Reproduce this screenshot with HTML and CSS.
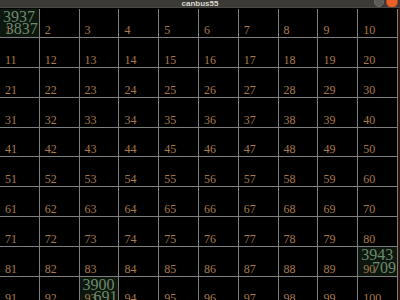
FILE: index.html
```html
<!DOCTYPE html>
<html>
<head>
<meta charset="utf-8">
<title>canbus55</title>
<link rel="stylesheet" href="styles.css">
</head>
<body>
<div class="window">
  <div class="titlebar">
    <div class="tb-side"></div>
    <div class="tb-title">canbus55</div>
    <div class="tb-side tb-buttons">
      <span class="btn btn-min"></span>
      <span class="btn btn-close"></span>
    </div>
  </div>
  <div class="content">
    <div class="grid">
      <div class="cell hot"><span class="num">1</span><span class="val top">3937</span><span class="val bottom">3837</span></div>
      <div class="cell"><span class="num">2</span></div>
      <div class="cell"><span class="num">3</span></div>
      <div class="cell"><span class="num">4</span></div>
      <div class="cell"><span class="num">5</span></div>
      <div class="cell"><span class="num">6</span></div>
      <div class="cell"><span class="num">7</span></div>
      <div class="cell"><span class="num">8</span></div>
      <div class="cell"><span class="num">9</span></div>
      <div class="cell"><span class="num">10</span></div>
      <div class="cell"><span class="num">11</span></div>
      <div class="cell"><span class="num">12</span></div>
      <div class="cell"><span class="num">13</span></div>
      <div class="cell"><span class="num">14</span></div>
      <div class="cell"><span class="num">15</span></div>
      <div class="cell"><span class="num">16</span></div>
      <div class="cell"><span class="num">17</span></div>
      <div class="cell"><span class="num">18</span></div>
      <div class="cell"><span class="num">19</span></div>
      <div class="cell"><span class="num">20</span></div>
      <div class="cell"><span class="num">21</span></div>
      <div class="cell"><span class="num">22</span></div>
      <div class="cell"><span class="num">23</span></div>
      <div class="cell"><span class="num">24</span></div>
      <div class="cell"><span class="num">25</span></div>
      <div class="cell"><span class="num">26</span></div>
      <div class="cell"><span class="num">27</span></div>
      <div class="cell"><span class="num">28</span></div>
      <div class="cell"><span class="num">29</span></div>
      <div class="cell"><span class="num">30</span></div>
      <div class="cell"><span class="num">31</span></div>
      <div class="cell"><span class="num">32</span></div>
      <div class="cell"><span class="num">33</span></div>
      <div class="cell"><span class="num">34</span></div>
      <div class="cell"><span class="num">35</span></div>
      <div class="cell"><span class="num">36</span></div>
      <div class="cell"><span class="num">37</span></div>
      <div class="cell"><span class="num">38</span></div>
      <div class="cell"><span class="num">39</span></div>
      <div class="cell"><span class="num">40</span></div>
      <div class="cell"><span class="num">41</span></div>
      <div class="cell"><span class="num">42</span></div>
      <div class="cell"><span class="num">43</span></div>
      <div class="cell"><span class="num">44</span></div>
      <div class="cell"><span class="num">45</span></div>
      <div class="cell"><span class="num">46</span></div>
      <div class="cell"><span class="num">47</span></div>
      <div class="cell"><span class="num">48</span></div>
      <div class="cell"><span class="num">49</span></div>
      <div class="cell"><span class="num">50</span></div>
      <div class="cell"><span class="num">51</span></div>
      <div class="cell"><span class="num">52</span></div>
      <div class="cell"><span class="num">53</span></div>
      <div class="cell"><span class="num">54</span></div>
      <div class="cell"><span class="num">55</span></div>
      <div class="cell"><span class="num">56</span></div>
      <div class="cell"><span class="num">57</span></div>
      <div class="cell"><span class="num">58</span></div>
      <div class="cell"><span class="num">59</span></div>
      <div class="cell"><span class="num">60</span></div>
      <div class="cell"><span class="num">61</span></div>
      <div class="cell"><span class="num">62</span></div>
      <div class="cell"><span class="num">63</span></div>
      <div class="cell"><span class="num">64</span></div>
      <div class="cell"><span class="num">65</span></div>
      <div class="cell"><span class="num">66</span></div>
      <div class="cell"><span class="num">67</span></div>
      <div class="cell"><span class="num">68</span></div>
      <div class="cell"><span class="num">69</span></div>
      <div class="cell"><span class="num">70</span></div>
      <div class="cell"><span class="num">71</span></div>
      <div class="cell"><span class="num">72</span></div>
      <div class="cell"><span class="num">73</span></div>
      <div class="cell"><span class="num">74</span></div>
      <div class="cell"><span class="num">75</span></div>
      <div class="cell"><span class="num">76</span></div>
      <div class="cell"><span class="num">77</span></div>
      <div class="cell"><span class="num">78</span></div>
      <div class="cell"><span class="num">79</span></div>
      <div class="cell"><span class="num">80</span></div>
      <div class="cell"><span class="num">81</span></div>
      <div class="cell"><span class="num">82</span></div>
      <div class="cell"><span class="num">83</span></div>
      <div class="cell"><span class="num">84</span></div>
      <div class="cell"><span class="num">85</span></div>
      <div class="cell"><span class="num">86</span></div>
      <div class="cell"><span class="num">87</span></div>
      <div class="cell"><span class="num">88</span></div>
      <div class="cell"><span class="num">89</span></div>
      <div class="cell hot"><span class="num">90</span><span class="val top">3943</span><span class="val bottom">709</span></div>
      <div class="cell"><span class="num">91</span></div>
      <div class="cell"><span class="num">92</span></div>
      <div class="cell hot"><span class="num">93</span><span class="val top">3900</span><span class="val bottom">691</span></div>
      <div class="cell"><span class="num">94</span></div>
      <div class="cell"><span class="num">95</span></div>
      <div class="cell"><span class="num">96</span></div>
      <div class="cell"><span class="num">97</span></div>
      <div class="cell"><span class="num">98</span></div>
      <div class="cell"><span class="num">99</span></div>
      <div class="cell"><span class="num">100</span></div>
    </div>
    <div class="edge"></div>
  </div>
</div>
</body>
</html>
```
FILE: styles.css
```css
html, body {
  margin: 0;
  padding: 0;
  background: #000;
  width: 400px;
  height: 300px;
  overflow: hidden;
}

.window {
  display: flex;
  flex-direction: column;
  width: 400px;
  height: 300px;
}

.titlebar {
  height: 8px;
  flex: 0 0 8px;
  background: #3b3a36;
  border-bottom: 1px solid #4a4944;
  box-sizing: border-box;
  display: grid;
  grid-template-columns: 1fr auto 1fr;
  align-items: end;
  overflow: hidden;
}

.tb-title {
  font-family: "Liberation Sans", Arial, sans-serif;
  font-weight: bold;
  font-size: 8px;
  line-height: 8px;
  height: 8px;
  color: #dcd8cf;
  margin-bottom: 3px;
}

.tb-buttons {
  display: flex;
  justify-content: flex-end;
  align-self: start;
  gap: 2px;
  padding-right: 2px;
  margin-top: -4px;
}

.btn {
  display: block;
  border-radius: 50%;
}

.btn-min {
  width: 8px;
  height: 8px;
  margin-top: 1px;
  background: #5c5b56;
  border: 1px solid #6e6d68;
}

.btn-close {
  width: 10px;
  height: 10px;
  background: #e9622a;
  border: 1px solid #c04a18;
}

.content {
  flex: 1;
  display: flex;
  overflow: hidden;
}

.grid {
  width: 398px;
  flex: 0 0 398px;
  display: grid;
  grid-template-columns: repeat(10, 1fr);
  grid-auto-rows: 29.8px;
  padding-top: 0.5px;
}

.cell {
  position: relative;
  border-right: 1px solid #7e7e7e;
  border-bottom: 1px solid #7e7e7e;
  display: flex;
  align-items: flex-end;
  padding: 0 0 1px 5px;
  box-sizing: border-box;
  overflow: hidden;
}

.num {
  font-family: "Liberation Serif", "Times New Roman", serif;
  font-size: 12px;
  line-height: 12px;
  color: #a87a4c;
}

.hot {
  background: #0e170e;
}

.val {
  position: absolute;
  font-family: "Liberation Serif", "Times New Roman", serif;
  font-size: 16px;
  line-height: 16px;
  color: #6c8a6d;
}

.val.top {
  top: 0;
  left: 3px;
}

.val.bottom {
  right: 1px;
  bottom: 0;
}

.edge {
  flex: 1;
  background: #2a1511;
}
```
